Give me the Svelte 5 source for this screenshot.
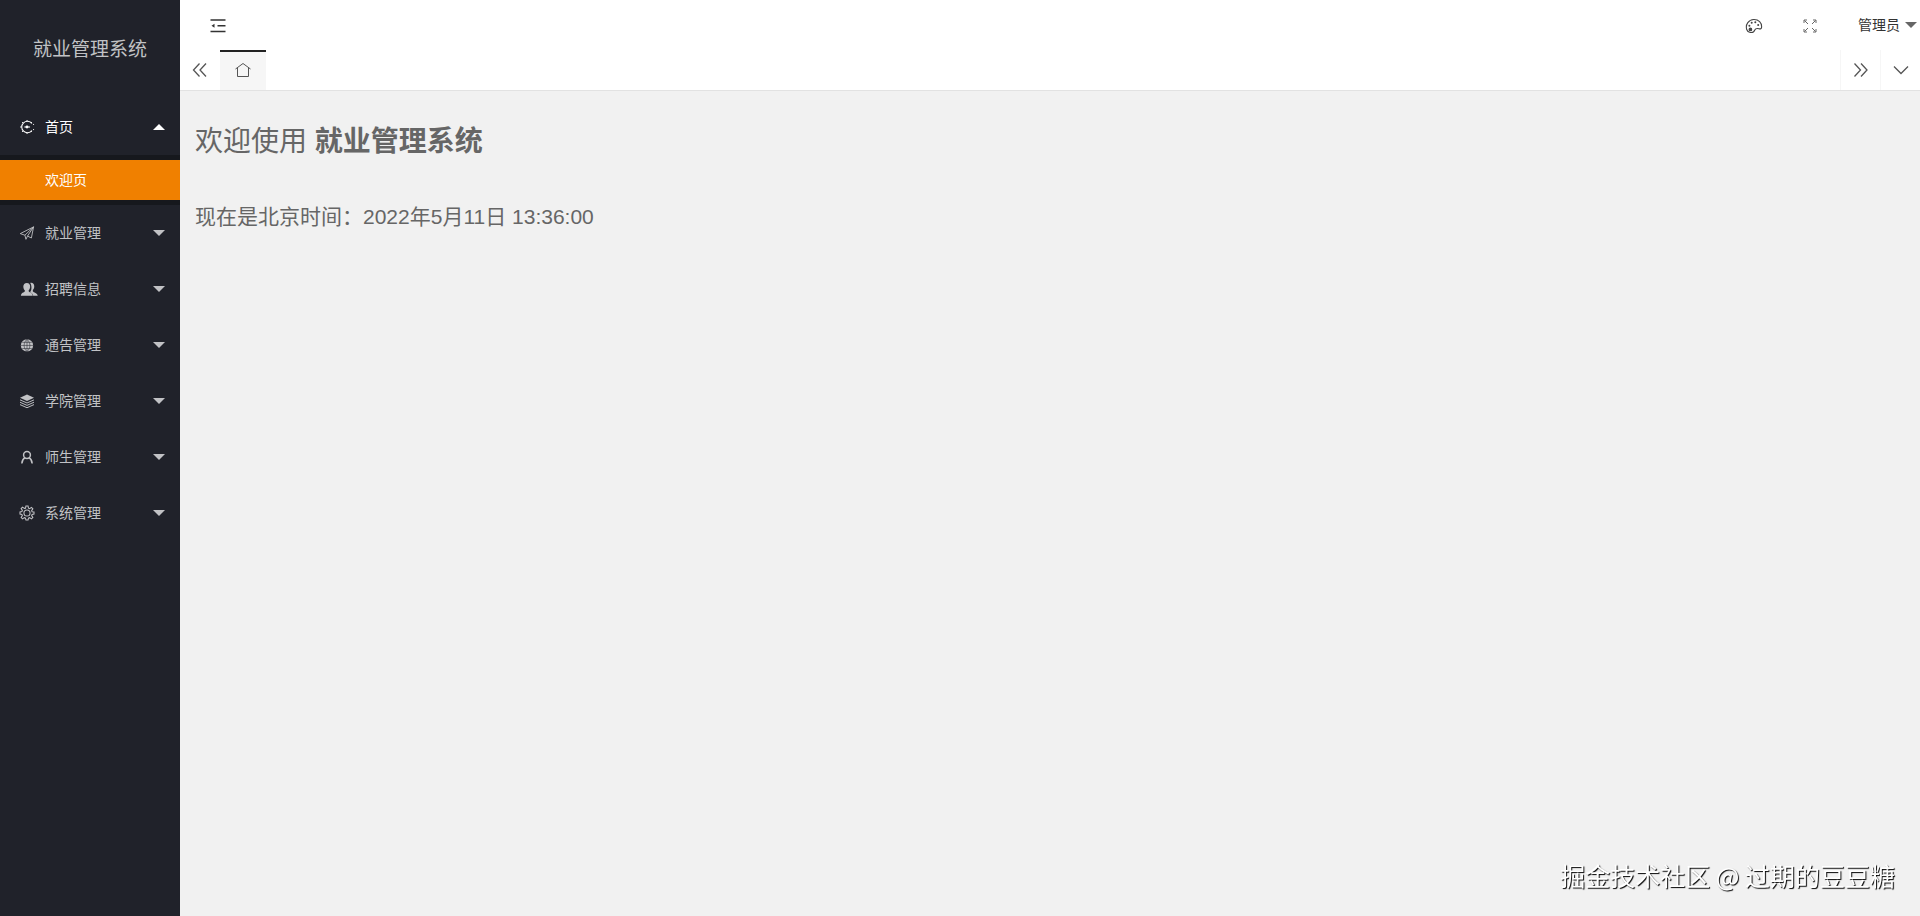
<script>
  import { onDestroy } from "svelte";

  let groups = [
    { title: "首页", icon: "home", open: true, pages: ["欢迎页"] },
    { title: "就业管理", icon: "plane", open: false, pages: [] },
    { title: "招聘信息", icon: "group", open: false, pages: [] },
    { title: "通告管理", icon: "globe", open: false, pages: [] },
    { title: "学院管理", icon: "layers", open: false, pages: [] },
    { title: "师生管理", icon: "user", open: false, pages: [] },
    { title: "系统管理", icon: "gear", open: false, pages: [] },
  ];

  let now = new Date(2022, 4, 11, 13, 36, 0);
  let running = false;
  let timer = null;

  function toggle(group) {
    group.open = !group.open;
    groups = groups;
  }

  function toggleClock() {
    running = !running;
    clearInterval(timer);
    if (running) {
      timer = setInterval(() => (now = new Date(now.getTime() + 1000)), 1000);
    }
  }

  function pad(n) {
    return String(n).padStart(2, "0");
  }

  onDestroy(() => clearInterval(timer));

  $: dateText = `${now.getFullYear()}年${now.getMonth() + 1}月${now.getDate()}日`;
  $: timeText = [now.getHours(), now.getMinutes(), now.getSeconds()].map(pad).join(":");
</script>

<div class="layout">
  <aside class="side">
    <div class="logo">就业管理系统</div>
    <nav>
      {#each groups as group}
        <button class="group" class:open={group.open} aria-expanded={group.open} on:click={() => toggle(group)}>
          <svg class="icon" viewBox="0 0 16 16" aria-hidden="true">
            {#if group.icon === "home"}
              <g fill="none" stroke="currentColor">
                <path d="M13.6 4A6.500 6.500 0 1 0 13.6 12" stroke-width="1.200" />
                <path d="M8 0v2M2.300 2.300l1.200 1.200M0 8h2M2.300 13.700l1.200-1.200M8 16v-2M13.700 13.700l-1.200-1.200M13.700 2.300l-1.200 1.200M15.500 4.500v1.200M15.500 10.300v1.200" />
                <path d="M5 8h6.500" stroke-width="1.200" />
              </g>
              <circle cx="8" cy="8" r="1.600" fill="currentColor" />
            {:else if group.icon === "plane"}
              <path d="M.3 8.7L15.500 1L13 13.700L8.6 11.5L6.8 15.200L5.6 10.5ZM5.6 10.5L15.500 1L8.6 11.5" fill="none" stroke="currentColor" stroke-linejoin="round" />
            {:else if group.icon === "group"}
              <g fill="currentColor">
                <path d="M11.500 1.200c2.700-.8 4.800.8 4.800 3.600 0 1.900-.6 3.200-1.600 4.300v1.700c1 1.100 5 1.500 5.600 5h-5.200c-.4-2.300-1.900-3.400-3.700-4.200 1.200-1.400 1.700-2.800 1.700-5.300 0-2-.5-3.700-1.600-5.100z" />
                <path d="M7.800 1c2.500 0 4 1.700 4 4.100 0 2-.7 3.500-1.700 4.400v1.300c1 1.100 4.200 1.400 4.500 5H1c.3-3.700 3.500-3.900 4.500-5V9.500c-1-.9-1.700-2.400-1.700-4.400C3.800 2.700 5.300 1 7.800 1z" />
                <path d="M11.300 1.500c1.300 3 .9 6-.8 8.200v1" fill="none" stroke="#20222a" stroke-width=".7" />
              </g>
            {:else if group.icon === "globe"}
              <circle cx="8" cy="8.500" r="7" fill="currentColor" />
              <path d="M1 8.500h14M8 1.500v14M2.500 5h11M2.500 12h11M8 1.500C3.600 5.500 3.600 11.500 8 15.500M8 1.500c4.400 4 4.400 10 0 14" fill="none" stroke="#20222a" stroke-width=".6" />
            {:else if group.icon === "layers"}
              <path d="M8 .5l8 3.800L8 8L0 4.300z" fill="currentColor" />
              <path d="M0 6.700L8 10.300L16 6.700M0 9.400L8 13L16 9.400M0 12.100L8 15.700L16 12.100" fill="none" stroke="currentColor" stroke-width="1.100" />
            {:else if group.icon === "user"}
              <g fill="none" stroke="currentColor" stroke-width="1.700">
                <circle cx="8" cy="5.700" r="3.900" />
                <path d="M5.800 8.800C3.700 10 2.300 12 2.100 15.500M10.200 8.800c2.100 1.200 3.500 3.200 3.700 6.700" />
              </g>
            {:else}
              <g fill="none" stroke="currentColor" stroke-width="1.200">
                <path d="M6.300 2.500L6.800 0h2.400l.5 2.500 1.300.5 2.100-1.400 1.600 1.600-1.400 2.100.5 1.300L16 6.800v2.400l-2.200.5-.5 1.300 1.400 2.100-1.600 1.600L11 13.300l-1.300.5L9.200 16H6.800l-.5-2.200L5 13.300l-2.100 1.400-1.600-1.600L2.700 11l-.5-1.300L0 9.200V6.800l2.200-.5.5-1.300-1.400-2.100 1.600-1.600L5 2.700z" />
                <circle cx="8" cy="8" r="3.500" />
              </g>
            {/if}
          </svg>
          <span class="label">{group.title}</span>
          <i class="caret" class:up={group.open}></i>
        </button>
        {#if group.open && group.pages.length}
          <div class="pages">
            {#each group.pages as page}
              <a href="#welcome" class="page">{page}</a>
            {/each}
          </div>
        {/if}
      {/each}
    </nav>
  </aside>

  <div class="body">
    <header class="header">
      <button class="tool menu" aria-label="侧边伸缩">
        <svg width="16" height="16" viewBox="0 0 16 16" fill="none" stroke="#333" stroke-width="1.500">
          <path d="M.5 2h15M7.500 7.800h8M.5 13.500h15" />
          <path d="M1.500 7.800L4.500 5.800v4z" fill="#333" stroke="none" />
        </svg>
      </button>
      <div class="tools">
        <button class="tool" aria-label="主题">
          <svg width="18" height="16" viewBox="0 0 18 16" fill="none" stroke="#444" stroke-width="1.100">
            <path d="M1.700 11.500C.2 6.300 3.800 1.700 8.700 1.500c5-.2 8.200 3.500 7.900 7.600-.1 1.700-1.100 2-2.600 1.600-2-.5-3.600-.2-4.200 1.300C9 14.100 7.500 14.800 5.300 14.500 3.500 14.200 2.200 13.200 1.700 11.500z" />
            <circle cx="5.400" cy="11.400" r="1.300" fill="#444" />
            <g fill="#444" stroke="none">
              <circle cx="4.400" cy="7.700" r="1" />
              <circle cx="6.700" cy="4.700" r="1" />
              <circle cx="10.300" cy="4.300" r="1" />
              <circle cx="13.200" cy="6.900" r="1" />
            </g>
          </svg>
        </button>
        <button class="tool" aria-label="全屏">
          <svg width="14" height="14" viewBox="0 0 14 14" fill="none" stroke="#666">
            <path d="M1.500 1.500L5 5M12.500 1.500L9 5M1.500 12.500L5 9M12.500 12.500L9 9" />
            <path d="M1 4V1h3M10 1h3v3M1 10v3h3M10 13h3v-3" />
          </svg>
        </button>
        <button class="account"><span class="label">管理员</span><i class="caret"></i></button>
      </div>
    </header>

    <div class="tabs">
      <button class="tab-control" aria-label="向左滚动">
        <svg width="16" height="16" viewBox="0 0 16 16"><path d="M7.500 1.500L1.500 8l6 6.500M14 1.500L8 8l6 6.500" /></svg>
      </button>
      <button class="tab" aria-label="首页标签">
        <svg width="18" height="16" viewBox="0 0 18 16"><path d="M1.500 7L9 1.500L16.500 7M3.500 6v8.500h11V6" /></svg>
      </button>
      <div class="spacer"></div>
      <button class="tab-control right" aria-label="向右滚动">
        <svg width="16" height="16" viewBox="0 0 16 16"><path d="M1.500 1.500L7.500 8l-6 6.500M8 1.500L14 8l-6 6.500" /></svg>
      </button>
      <button class="tab-control right" aria-label="标签操作">
        <svg width="16" height="16" viewBox="0 0 16 16"><path d="M1 4.500L8 11.500L15 4.500" /></svg>
      </button>
    </div>

    <main id="welcome">
      <h1>欢迎使用 <strong>就业管理系统</strong></h1>
      <p>现在是北京时间：<time on:dblclick={toggleClock}>{dateText} {timeText}</time></p>
    </main>
  </div>

  <div class="credit">掘金技术社区 @ 过期的豆豆糖</div>
</div>

<style>
  :global(body) {
    margin: 0;
  }

  .layout {
    display: flex;
    min-height: 100vh;
    background: #f1f1f1;
    color: #666;
    font-family: "Liberation Sans", "Noto Sans CJK SC", sans-serif;
    font-size: 14px;
  }

  button {
    margin: 0;
    padding: 0;
    border: none;
    background: none;
    color: inherit;
    font: inherit;
    cursor: pointer;
  }

  svg {
    display: block;
  }

  .side {
    flex: 0 0 180px;
    background: #20222a;
    color: #c1c2c5;
  }

  .logo {
    padding-left: 33px;
    font-size: 19px;
    line-height: 99px;
  }

  .group {
    display: flex;
    align-items: center;
    width: 100%;
    height: 56px;
    padding: 0 15px 0 20px;
    text-align: left;
  }

  .group.open {
    color: #fff;
  }

  .icon {
    width: 14px;
    height: 14px;
    margin-right: 11px;
    overflow: visible;
  }

  .label {
    flex: 1;
    padding-bottom: 2px;
  }

  .caret {
    border: 6px solid transparent;
    border-top-color: currentColor;
    border-bottom: none;
  }

  .caret.up {
    border-top: none;
    border-bottom: 6px solid currentColor;
  }

  .pages {
    padding: 5px 0;
    background: #16181d;
  }

  .page {
    display: block;
    padding-left: 45px;
    background: #f08000;
    color: #fff;
    line-height: 40px;
    text-decoration: none;
  }

  .body {
    flex: 1;
    min-width: 0;
  }

  .header {
    display: flex;
    justify-content: space-between;
    height: 50px;
    background: #fff;
    color: #333;
  }

  .tool {
    display: flex;
    align-items: center;
    justify-content: center;
    width: 56px;
    height: 52px;
  }

  .menu {
    margin-left: 10px;
  }

  .tools {
    display: flex;
  }

  .account {
    display: flex;
    align-items: center;
    gap: 5px;
    padding: 0 3px 0 20px;
  }

  .account .caret {
    color: #666;
  }

  .tabs {
    display: flex;
    height: 40px;
    background: #fff;
    border-bottom: 1px solid #e2e2e2;
  }

  .tabs svg {
    fill: none;
    stroke: #555;
    stroke-width: 1.300;
  }

  .tab-control,
  .tab {
    display: flex;
    align-items: center;
    justify-content: center;
    width: 40px;
  }

  .tab-control.right {
    box-sizing: border-box;
    border-left: 1px solid #f6f6f6;
  }

  .tab {
    width: 46px;
    padding-bottom: 2px;
    border-top: 2px solid #222;
    background: #f6f6f6;
  }

  .tab svg {
    stroke-width: 1;
  }

  .spacer {
    flex: 1;
  }

  main {
    padding: 30px 15px;
  }

  h1 {
    margin: 0 0 38px;
    font-size: 28px;
    font-weight: 400;
    line-height: 42px;
  }

  h1 strong {
    font-weight: 700;
  }

  p {
    margin: 0;
    font-size: 21px;
    line-height: 32px;
  }

  .credit {
    position: fixed;
    right: 25px;
    bottom: 22px;
    color: #fff;
    font-family: "Noto Sans CJK SC", sans-serif;
    font-size: 25px;
    line-height: 38px;
    text-shadow: 1px 1px 1px #000;
  }
</style>
